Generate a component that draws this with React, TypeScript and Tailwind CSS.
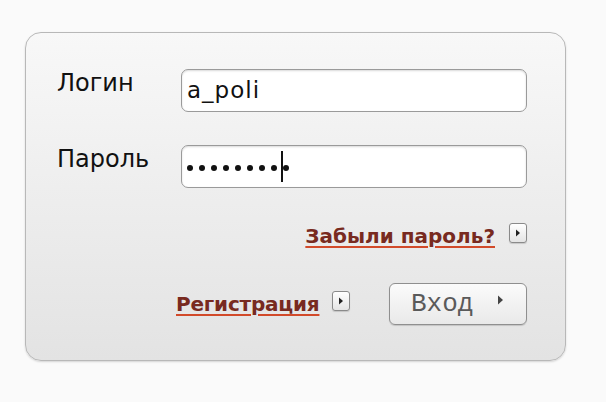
import React from "react";

function Arrow({ className = "" }: { className?: string }) {
  return (
    <span className={"flex h-[20px] w-[18px] items-center justify-center rounded-[3px] border border-[#8a8a8a] bg-gradient-to-b from-[#ffffff] to-[#e4e4e4] shadow-[0_1px_1px_rgba(0,0,0,0.15)] " + className}>
      <svg width="6" height="8" viewBox="0 0 6 8">
        <path d="M1 0.5 L5 4 L1 7.5 Z" fill="#222" />
      </svg>
    </span>
  );
}

export default function App() {
  return (
    <div className="h-[402px] w-[606px] bg-[#fafafa] pl-[25px] pt-[32px]" style={{ fontFamily: '"DejaVu Sans", sans-serif' }}>
      <div className="h-[329px] w-[541px] rounded-[16px] border border-[#b8b8b8] bg-gradient-to-b from-[#f8f8f8] to-[#e3e3e3] pl-[31px] pr-[38px] pt-[36px] shadow-[0_1px_2px_rgba(0,0,0,0.15)]">
        <div className="flex items-start">
          <div className="w-[124px] -mt-[1px] text-[24px] leading-[30px] text-[#111]">Логин</div>
          <div className="flex h-[43px] flex-1 items-center rounded-[7px] border border-[#9a9a9a] bg-white pl-[5px] shadow-[inset_0_1px_2px_rgba(0,0,0,0.15)]">
            <span className="text-[23px] leading-none tracking-[1px] text-[#111]">a_poli</span>
          </div>
        </div>
        <div className="mt-[33px] flex items-start">
          <div className="w-[124px] -mt-[1px] text-[24px] leading-[30px] text-[#111]">Пароль</div>
          <div className="flex h-[43px] flex-1 items-center rounded-[7px] border border-[#9a9a9a] bg-white pl-[5px] shadow-[inset_0_1px_2px_rgba(0,0,0,0.15)]">
            <div className="mt-[2px] flex items-center gap-[6px]">
              {[0, 1, 2, 3, 4, 5, 6, 7, 8].map((i) => (
                <span key={i} className="relative h-[6px] w-[6px] rounded-full bg-[#111]">
                  {i === 8 && <span className="absolute left-[-2px] top-[-14px] h-[31px] w-[2px] bg-[#111]" />}
                </span>
              ))}
            </div>
          </div>
        </div>
        <div className="mt-[36px] flex items-center justify-end">
          <a className="text-[20px] font-bold leading-[24px] text-[#782a20] underline decoration-[#d24a2a] decoration-2 underline-offset-[3px]">Забыли пароль?</a>
          <Arrow className="ml-[14px] -mt-[6px]" />
        </div>
        <div className="mt-[35px] flex items-center">
          <div className="ml-[119px] flex items-center">
            <a className="text-[20px] font-bold leading-[24px] tracking-[-0.2px] text-[#782a20] underline decoration-[#d24a2a] decoration-2 underline-offset-[3px]">Регистрация</a>
            <Arrow className="ml-[13px] -mt-[6px]" />
          </div>
          <div className="ml-auto flex h-[42px] w-[138px] items-center rounded-[6px] border border-[#8f8f8f] bg-gradient-to-b from-[#fbfbfb] to-[#e9e9e9] pl-[21px] shadow-[0_1px_1px_rgba(0,0,0,0.15)]">
            <span className="text-[26px] leading-none text-[#5a5a5a] [font-family:'Liberation_Mono',monospace]">Вход</span>
            <svg className="ml-[24px] mt-[-8px]" width="7" height="10" viewBox="0 0 7 10">
              <path d="M1 0.5 L6 5 L1 9.5 Z" fill="#444" />
            </svg>
          </div>
        </div>
      </div>
    </div>
  );
}
